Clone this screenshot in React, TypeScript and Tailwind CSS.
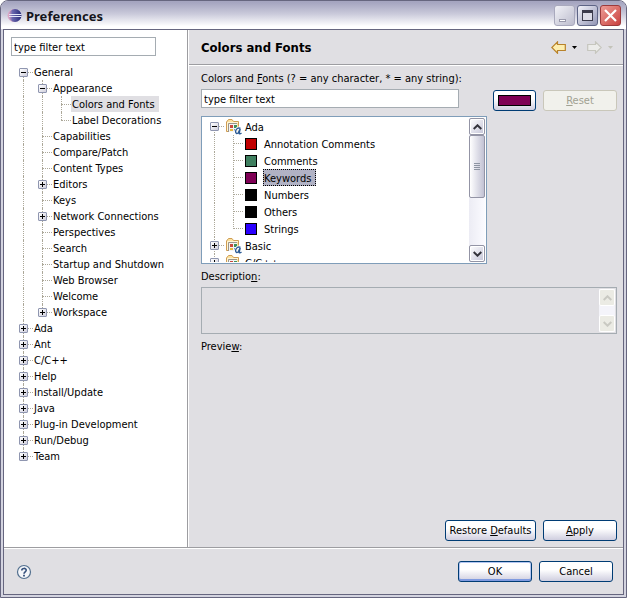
import { useState, type ReactNode } from "react";
import clsx from "clsx";

type Node = {
  label: string;
  children?: Node[];
  open?: boolean;
  selected?: boolean;
  icon?: ReactNode;
};

const letterA =
  "M14.4 9.4C12.4 8.2 9.8 9.8 9.6 12.4C9.5 14.4 11 15.2 12.4 13.6L14.2 9.8L13.2 14C13.1 15 14 15.2 15.5 14.2";

const FolderIcon = () => (
  <svg width="16" height="16" viewBox="0 0 16 16" aria-hidden="true">
    <path d="M0.5 12.5V3L2.5 0.5H6L7.5 2.5H12.5V12.5Z" fill="#fbe2a0" stroke="#cf9c52" />
    <path d="M1.5 12V3.5H12" fill="none" stroke="#fff6d6" />
    <rect x="3" y="5" width="8" height="8" fill="#f4f4f4" />
    <path d="M2.5 13V4.5H11" fill="none" stroke="#9a958c" />
    <rect x="4" y="6" width="3" height="3" fill="#c8473d" />
    <rect x="8" y="6" width="3" height="3" fill="#3f8f5b" />
    <rect x="4" y="10" width="3" height="2" fill="#e8b93c" />
    <rect x="8" y="10" width="2" height="2" fill="#2f57a8" />
    <path d={letterA} fill="none" stroke="#fff" strokeWidth="3" />
    <path d={letterA} fill="none" stroke="#2b5a94" strokeWidth="1.4" />
  </svg>
);

const Swatch = ({ color }: { color: string }) => (
  <span className="ml-px block size-3 border border-black" style={{ backgroundColor: color }} />
);

const pages: Node[] = [
  {
    label: "General",
    open: true,
    children: [
      {
        label: "Appearance",
        open: true,
        children: [{ label: "Colors and Fonts", selected: true }, { label: "Label Decorations" }],
      },
      { label: "Capabilities" },
      { label: "Compare/Patch" },
      { label: "Content Types" },
      { label: "Editors", children: [] },
      { label: "Keys" },
      { label: "Network Connections", children: [] },
      { label: "Perspectives" },
      { label: "Search" },
      { label: "Startup and Shutdown" },
      { label: "Web Browser" },
      { label: "Welcome" },
      { label: "Workspace", children: [] },
    ],
  },
  { label: "Ada", children: [] },
  { label: "Ant", children: [] },
  { label: "C/C++", children: [] },
  { label: "Help", children: [] },
  { label: "Install/Update", children: [] },
  { label: "Java", children: [] },
  { label: "Plug-in Development", children: [] },
  { label: "Run/Debug", children: [] },
  { label: "Team", children: [] },
];

const themeEntries: Node[] = [
  {
    label: "Ada",
    open: true,
    icon: <FolderIcon />,
    children: [
      { label: "Annotation Comments", icon: <Swatch color="#c00000" /> },
      { label: "Comments", icon: <Swatch color="#3f7f5f" /> },
      { label: "Keywords", icon: <Swatch color="#7f0055" />, selected: true },
      { label: "Numbers", icon: <Swatch color="#000000" /> },
      { label: "Others", icon: <Swatch color="#000000" /> },
      { label: "Strings", icon: <Swatch color="#2a00ff" /> },
    ],
  },
  { label: "Basic", icon: <FolderIcon />, children: [] },
  { label: "C/C++", icon: <FolderIcon />, children: [] },
];

type ItemProps = {
  node: Node;
  lines: boolean[];
  first: boolean;
  last: boolean;
  roomy?: boolean;
};

function TreeItem({ node, lines, first, last, roomy }: ItemProps) {
  const [open, setOpen] = useState(!!node.open);
  const top = first && lines.length === 0;

  return (
    <li role="treeitem" aria-expanded={node.children ? open : undefined} aria-selected={!!node.selected}>
      <div className={clsx("flex items-center", roomy ? "h-[17px]" : "h-4")}>
        {lines.map((on, i) => (
          <span
            key={i}
            className={clsx("ml-1 mr-3.5 h-full w-px", on && "border-l border-dotted border-[#aca899]")}
          />
        ))}
        <span className="grid h-full w-3.5 shrink-0">
          <span
            className={clsx(
              "col-start-1 row-start-1 ml-1 w-px border-l border-dotted border-[#aca899]",
              top || last ? "h-1/2" : "h-full",
              top && "self-end"
            )}
          />
          <span className="col-start-1 row-start-1 ml-1 w-2.5 self-center border-t border-dotted border-[#aca899]" />
          {node.children && (
            <button
              type="button"
              aria-label={open ? "Collapse" : "Expand"}
              onClick={() => setOpen(!open)}
              className="col-start-1 row-start-1 grid size-[9px] place-items-center self-center rounded-[1px] border border-[#8f96b0] bg-linear-to-br from-white to-[#d0cfdc]"
            >
              <span className="col-start-1 row-start-1 h-px w-[5px] bg-black" />
              {!open && <span className="col-start-1 row-start-1 h-[5px] w-px bg-black" />}
            </button>
          )}
        </span>
        {node.icon && <span className={clsx("w-4 shrink-0", lines.length ? "ml-px mr-[3px]" : "mx-0.5")}>{node.icon}</span>}
        <span
          className={clsx(
            "whitespace-nowrap border pt-0.5",
            roomy ? "leading-[13px]" : "leading-3",
            node.selected && roomy && "border-dotted border-black bg-[#b1b2c4] pr-1",
            node.selected && !roomy && "border-[#e0dfe3] bg-[#e0dfe3] pr-[3px]",
            !node.selected && "border-transparent"
          )}
        >
          {node.label}
        </span>
      </div>
      {open && node.children && node.children.length > 0 && (
        <ul role="group">
          {node.children.map((child, i) => (
            <TreeItem
              key={child.label}
              node={child}
              lines={[...lines, !last]}
              first={i === 0}
              last={i === node.children!.length - 1}
              roomy={roomy}
            />
          ))}
        </ul>
      )}
    </li>
  );
}

function Tree({ nodes, label, roomy }: { nodes: Node[]; label: string; roomy?: boolean }) {
  return (
    <ul role="tree" aria-label={label}>
      {nodes.map((node, i) => (
        <TreeItem
          key={node.label}
          node={node}
          lines={[]}
          first={i === 0}
          last={!roomy && i === nodes.length - 1}
          roomy={roomy}
        />
      ))}
    </ul>
  );
}

function PushButton({
  children,
  className,
  isDefault,
  disabled,
  label,
}: {
  children: ReactNode;
  className?: string;
  isDefault?: boolean;
  disabled?: boolean;
  label?: string;
}) {
  return (
    <button
      type="button"
      disabled={disabled}
      aria-label={label}
      className={clsx(
        "flex h-[21px] items-center justify-center whitespace-nowrap rounded-[3px] border",
        disabled
          ? "border-[#c9c7ba] bg-[#f1f1ec] text-[#a1a192]"
          : "border-[#003c74] bg-linear-to-b from-white from-40% to-[#cfcedf]",
        isDefault && "inset-ring inset-ring-[#b5c7f2] inset-shadow-[0_-2px_0_#7f9ae0]",
        className ?? "w-[74px]"
      )}
    >
      {children}
    </button>
  );
}

function ScrollButton({ dir, disabled }: { dir: "up" | "down"; disabled?: boolean }) {
  return (
    <button
      type="button"
      aria-label={"Scroll " + dir}
      disabled={disabled}
      className={clsx(
        "flex h-[17px] w-4 shrink-0 items-center justify-center rounded-xs border",
        disabled
          ? "border-white bg-[#ebebe4] text-[#c9c9c2]"
          : "border-[#9394a5] bg-linear-to-br from-white to-[#c5c5d8] text-[#33333b] inset-ring inset-ring-white"
      )}
    >
      <svg width="9" height="6" viewBox="0 0 9 6" fill="none" stroke="currentColor" strokeWidth="2" aria-hidden="true">
        <path d={dir === "up" ? "M0.7 5L4.5 1.3L8.3 5" : "M0.7 1L4.5 4.7L8.3 1"} />
      </svg>
    </button>
  );
}

function TitleBar() {
  return (
    <header className="flex h-7 items-center bg-linear-to-b from-[#a5a5c0] from-5% via-[#c9c9da] via-45% to-white to-90% pl-1.5 pr-[5px] pt-px">
      <svg width="15" height="15" viewBox="0 0 15 15" aria-hidden="true">
        <defs>
          <linearGradient id="sphere" x1="0" y1="0" x2="1" y2="0">
            <stop offset="0" stopColor="#e3a6c0" />
            <stop offset="0.3" stopColor="#6a67ae" />
            <stop offset="1" stopColor="#272a78" />
          </linearGradient>
        </defs>
        <circle cx="7" cy="7.5" r="6.5" fill="#d9a9c8" />
        <circle cx="8" cy="7.5" r="6.5" fill="url(#sphere)" />
        <path d="M2 6.5H14.5M2 8.5H14.5" stroke="#e4e6f8" />
      </svg>
      <h1 className="ml-1 flex-1 pt-px font-['Noto_Sans',sans-serif] text-[13px] font-bold leading-4 text-[#15151c]">
        Preferences
      </h1>
      <div className="flex gap-0.5">
        <button
          type="button"
          aria-label="Minimize"
          className="flex size-[21px] items-end rounded-[3px] border border-[#a9a9bd] bg-linear-to-br from-[#f2f2f7] to-[#bcbccd] pb-[3px] pl-1"
        >
          <span className="h-[3px] w-[7px] border border-[#9a9aac] bg-white" />
        </button>
        <button
          type="button"
          aria-label="Maximize"
          className="grid size-[21px] place-items-center rounded-[3px] border border-[#5d6485] bg-linear-to-br from-[#f4f4fa] to-[#9295b5]"
        >
          <span className="size-[11px] border border-t-[3px] border-[#3a3a4c] bg-[#dcdce8]" />
        </button>
        <button
          type="button"
          aria-label="Close"
          className="grid size-[21px] place-items-center rounded-[3px] border border-[#9b3a3c] bg-linear-to-br from-[#ec9b96] to-[#c93f40]"
        >
          <svg width="13" height="13" viewBox="0 0 13 13" aria-hidden="true">
            <path d="M1 1L12 12M12 1L1 12" stroke="#fff" strokeWidth="2.2" />
          </svg>
        </button>
      </div>
    </header>
  );
}

function HistoryButtons() {
  return (
    <div className="flex items-center">
      <button type="button" aria-label="Back">
        <svg width="15" height="13" viewBox="0 0 15 13" aria-hidden="true">
          <path d="M6.5 0.8L0.8 6.5L6.5 12.2V9.5H14.3V3.5H6.5Z" fill="#fdeeb0" stroke="#b8822a" strokeWidth="1.2" />
        </svg>
      </button>
      <button type="button" aria-label="Back history" className="ml-1.5">
        <svg width="5" height="3" viewBox="0 0 5 3" aria-hidden="true">
          <path d="M0 0H5L2.5 3Z" fill="#000" />
        </svg>
      </button>
      <button type="button" aria-label="Forward" disabled className="ml-2.5">
        <svg width="15" height="13" viewBox="0 0 15 13" aria-hidden="true">
          <path d="M8.5 0.8L14.2 6.5L8.5 12.2V9.5H0.7V3.5H8.5Z" fill="#ececea" stroke="#c6c6be" strokeWidth="1.2" />
        </svg>
      </button>
      <button type="button" aria-label="Forward history" disabled className="ml-1.5">
        <svg width="5" height="3" viewBox="0 0 5 3" aria-hidden="true">
          <path d="M0 0H5L2.5 3Z" fill="#c3c3b9" />
        </svg>
      </button>
    </div>
  );
}

export default function App() {
  return (
    <div className="flex min-h-screen flex-col overflow-hidden rounded-t-lg border border-[#66667f] bg-[#d4d4e0] font-['DejaVu_Sans_Condensed','DejaVu_Sans',sans-serif] text-[11px] leading-4 text-black">
      <TitleBar />
      <div className="mx-0.5 mb-0.5 flex flex-1 flex-col border border-[#66667f] bg-[#e0dfe3]">
        <div className="flex flex-1 border-b border-[#9d9da1]">
          <aside className="w-[184px] shrink-0 border-r border-[#9d9da1] bg-white pt-[7px]">
            <input
              type="text"
              aria-label="Filter pages"
              defaultValue="type filter text"
              className="ml-[7px] block h-[19px] w-[145px] border border-[#a5acb2] bg-white px-0.5 pt-px"
            />
            <nav className="ml-[15px] mt-2">
              <Tree nodes={pages} label="Preference pages" />
            </nav>
          </aside>

          <main className="flex min-w-0 flex-1 flex-col border-l border-white">
            <div className="flex h-[35px] shrink-0 items-center justify-between border-b border-[#9d9da1] pl-3 pr-2.5 pt-px">
              <h2 className="pt-px text-[13px] font-bold">Colors and Fonts</h2>
              <HistoryButtons />
            </div>
            <div className="flex flex-1 flex-col border-t border-white pb-1.5 pl-3 pr-1.5">
              <div className="flex gap-1.5">
                <div className="min-w-0 flex-1">
                  <label htmlFor="font-filter" className="block whitespace-nowrap pb-0.5 pt-[5px]">
                    Colors and <u>F</u>onts (? = any character, * = any string):
                  </label>
                  <input
                    id="font-filter"
                    type="text"
                    defaultValue="type filter text"
                    className="block h-[19px] w-[258px] max-w-full border border-[#a5acb2] bg-white px-0.5 pt-px"
                  />
                  <div className="mt-2 flex h-[148px] border border-[#7f9db9] bg-white p-px">
                    <div className="h-full flex-1 overflow-hidden pl-[7px]">
                      <Tree nodes={themeEntries} label="Colors and fonts" roomy />
                    </div>
                    <div className="flex w-4 flex-col bg-linear-to-r from-[#ececf4] to-[#fbfbff]">
                      <ScrollButton dir="up" />
                      <div className="flex h-[63px] flex-col items-center justify-center gap-px rounded-xs border border-[#9394a5] bg-linear-to-r from-white to-[#c2c2d4]">
                        <span className="h-px w-1.5 bg-[#8e95a2]" />
                        <span className="h-px w-1.5 bg-[#8e95a2]" />
                        <span className="h-px w-1.5 bg-[#8e95a2]" />
                        <span className="h-px w-1.5 bg-[#8e95a2]" />
                      </div>
                      <div className="flex-1" />
                      <ScrollButton dir="down" />
                    </div>
                  </div>
                </div>
                <div className="flex gap-[7px] pt-6">
                  <PushButton label="Choose color" className="w-[43px]">
                    <span className="h-[11px] w-[33px] border border-black bg-[#7f0055]" />
                  </PushButton>
                  <PushButton disabled>
                    <span className="pt-px">
                      <u>R</u>eset
                    </span>
                  </PushButton>
                </div>
              </div>

              <label htmlFor="description" className="pb-0.5 pt-[5px]">
                Descriptio<u>n</u>:
              </label>
              <div className="flex h-[47px] border border-[#a5acb2] p-px">
                <textarea id="description" readOnly className="min-w-0 flex-1 resize-none bg-transparent" />
                <div className="flex w-4 flex-col justify-between bg-[#f4f4fa]">
                  <ScrollButton dir="up" disabled />
                  <ScrollButton dir="down" disabled />
                </div>
              </div>

              <p className="flex-1 pt-[5px]">
                Previe<u>w</u>:
              </p>

              <div className="flex justify-end gap-[7px]">
                <PushButton className="w-[91px]">
                  <span className="pt-px">
                    Restore <u>D</u>efaults
                  </span>
                </PushButton>
                <PushButton>
                  <span className="pt-px">
                    <u>A</u>pply
                  </span>
                </PushButton>
              </div>
            </div>
          </main>
        </div>

        <footer className="flex h-[46px] shrink-0 items-center gap-[7px] border-t border-white pl-3 pr-2.5">
          <button type="button" aria-label="Help" className="mr-auto">
            <svg width="16" height="16" viewBox="0 0 16 16" fill="none" aria-hidden="true">
              <circle cx="8" cy="8" r="6.5" fill="#f4f6fa" stroke="#53708f" strokeWidth="1.2" />
              <path d="M5.8 6.4C5.8 3.8 10.2 3.8 10.2 6.2C10.2 7.8 8 7.8 8 9.8" stroke="#35507c" strokeWidth="1.6" />
              <path d="M8 10.8V12.4" stroke="#35507c" strokeWidth="1.8" />
            </svg>
          </button>
          <PushButton isDefault>
            <span className="pt-px">OK</span>
          </PushButton>
          <PushButton>
            <span className="pt-px">Cancel</span>
          </PushButton>
        </footer>
      </div>
    </div>
  );
}
